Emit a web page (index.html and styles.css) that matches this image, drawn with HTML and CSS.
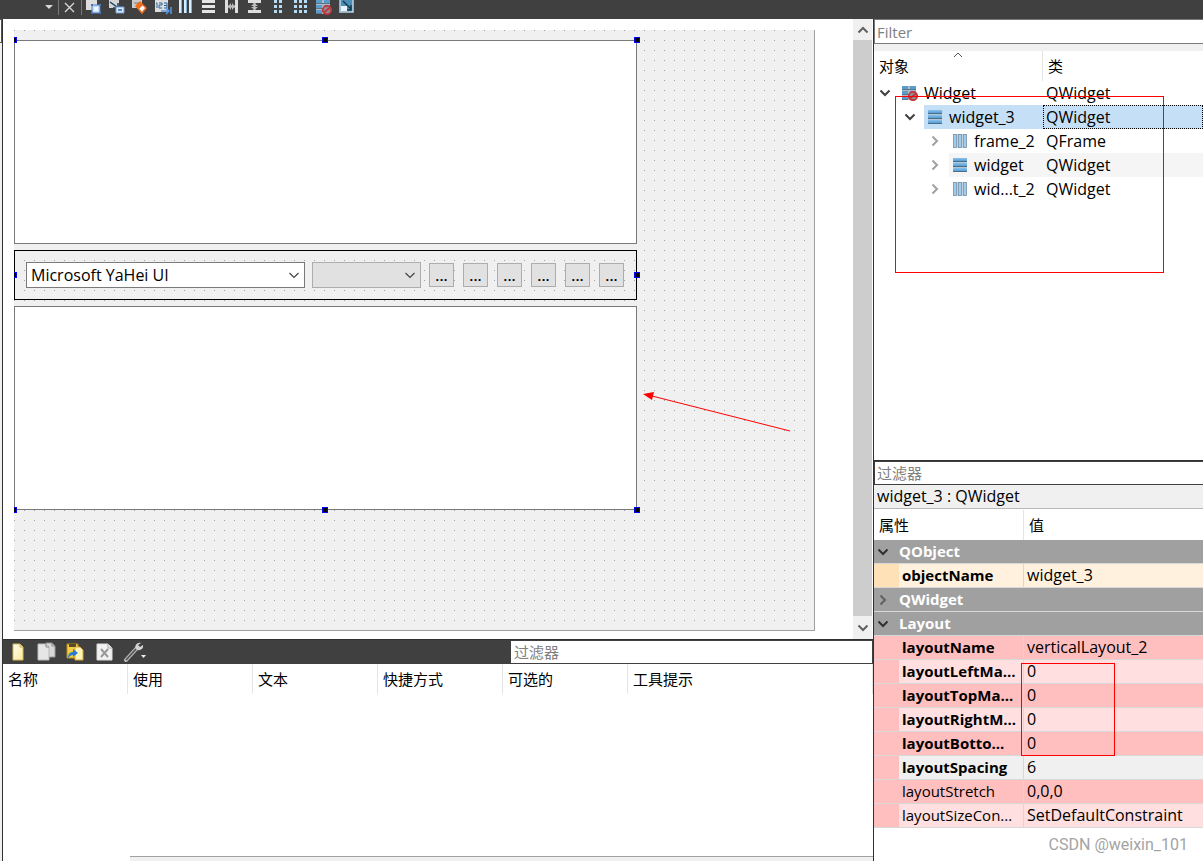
FILE: index.html
```
<!DOCTYPE html>
<html lang="zh-CN">
<head>
<meta charset="utf-8">
<title>Qt Designer</title>
<link rel="stylesheet" href="styles.css">
</head>
<body>
<svg class="defs" aria-hidden="true">
  <defs>
    <linearGradient id="blue" x1="0" y1="0" x2="0" y2="1"><stop offset="0" stop-color="#86c2ee"/><stop offset="1" stop-color="#4a90c6"/></linearGradient>
    <linearGradient id="cream" x1="0" y1="0" x2="1" y2="1"><stop offset="0" stop-color="#fffef0"/><stop offset="1" stop-color="#fbe9a0"/></linearGradient>
    <symbol id="down" viewBox="0 0 12 12"><path d="M1.500 3.500 6 8l4.500-4.500" fill="none" stroke="currentColor" stroke-width="2"/></symbol>
    <symbol id="right" viewBox="0 0 12 12"><path d="M3.500 1.500 8 6l-4.500 4.500" fill="none" stroke="currentColor" stroke-width="2"/></symbol>
    <symbol id="thin-down" viewBox="0 0 12 12"><path d="M1.500 4 6 8.500 10.500 4" fill="none" stroke="#444" stroke-width="1.200"/></symbol>
    <symbol id="vlay" viewBox="0 0 16 16"><path d="M1 1h14v14H1z" fill="#b4c4d2"/><g fill="url(#blue)"><rect x="1" y="1" width="14" height="4" rx="1"/><rect x="1" y="6" width="14" height="4" rx="1"/><rect x="1" y="11" width="14" height="4" rx="1"/></g><path d="M1 4.500h14M1 9.500h14M1 14.500h14" stroke="#47708f"/></symbol>
    <symbol id="hlay" viewBox="0 0 16 16"><path d="M1 1h14v14H1z" fill="#c9d0d6"/><g fill="#9fcdf0" stroke="#6f8ca4" stroke-width=".7"><rect x="1.500" y="1.500" width="3" height="13"/><rect x="6.500" y="1.500" width="3" height="13"/><rect x="11.500" y="1.500" width="3" height="13"/></g></symbol>
    <symbol id="broken" viewBox="0 0 16 16"><path d="M0 1h14v9H0zM0 10h8v5H0z" fill="#aeb9c4"/><path d="M0 1h6v3H0zM8 1h6v3H8zM0 6h6v3H0zM8 6h6v3H8zM0 11h6v3H0z" fill="#5a9ccb"/><path d="M0 4.500h14M0 9.500h8M0 14.500h6" stroke="#5c7488"/><circle cx="11" cy="11" r="4.200" fill="#8d8f96" stroke="#c4343a" stroke-width="1.800"/><path d="m8 13.500 6-5" stroke="#c4343a" stroke-width="1.800"/></symbol>
  </defs>
</svg>

<header class="toolbar">
  <button class="tool drop" aria-label="更多"><svg width="10" height="16" viewBox="0 0 10 16"><path d="M1 6h8l-4 4z" fill="#d8d8d8"/></svg></button>
  <span class="rule"></span>
  <button class="tool close" aria-label="关闭"><svg width="12" height="16" viewBox="0 0 12 16"><path d="m1 4 9 9M10 4l-9 9" stroke="#d8d8d8" stroke-width="1.300"/></svg></button>
  <span class="rule"></span>
  <div class="tools">
    <button class="tool" aria-label="编辑控件"><svg width="16" height="16" viewBox="0 0 16 16"><path d="M0 0h11v11H0z" fill="#ddd"/><path d="M6 6h8v8H6z" fill="#c5dcf8" stroke="#4f7fc0"/><path d="M8 8h4v4H8z" fill="#eef5ff"/><path d="M5 5h2v2H5zM13 5h2v2h-2zM5 13h2v2H5zM13 13h2v2h-2z" fill="#4878b8"/></svg></button>
    <button class="tool" aria-label="编辑信号/槽"><svg width="16" height="16" viewBox="0 0 16 16"><path d="M0 0h10v9H0z" fill="#d5d5d5"/><path d="m1 3 7 5M9 4v5H4" fill="none" stroke="#173f60" stroke-width="1.500"/><path d="M7 8h8v6H7z" fill="#d9e8fb" stroke="#799dcc"/><path d="M9 11h4" stroke="#5a86c0" stroke-width="2"/></svg></button>
    <button class="tool" aria-label="编辑伙伴"><svg width="16" height="16" viewBox="0 0 16 16"><path d="M0 0h10v9H0z" fill="#ccc"/><path d="M2 4h6" stroke="#777"/><path d="m4 7 4-4 6 6-4 5z" fill="#fff" stroke="#f06a20" stroke-width="1.500"/><path d="m4 7 4-4 3 3-4 4z" fill="#f26a1b"/></svg></button>
    <button class="tool" aria-label="编辑Tab顺序"><svg width="18" height="16" viewBox="0 0 18 16"><path d="M1 0h13v13H1z" fill="#ddd"/><path d="M2 4h1v5M5 4h3v2H5v3h3M10 4h3v5h-3M10 6.500h3" fill="none" stroke="#28669c"/><path d="M7 12h8m-3-3 3 3-3 3M17 8v7" fill="none" stroke="#5595dc" stroke-width="1.600"/></svg></button>
    <button class="tool" aria-label="水平布局"><svg width="16" height="16" viewBox="0 0 16 16"><path d="M1 1h3v13H1zM6 1h3v13H6zM11 1h3v13h-3z" fill="#d5edff"/><path d="M3.500 1v13M8.500 1v13M13.500 1v13" stroke="#7fb0d4"/></svg></button>
    <button class="tool" aria-label="垂直布局"><svg width="16" height="16" viewBox="0 0 16 16"><path d="M1 1h13v3H1zM1 6h13v3H1zM1 11h13v3H1z" fill="#e4e4e4"/></svg></button>
    <button class="tool" aria-label="水平分裂器"><svg width="16" height="16" viewBox="0 0 16 16"><path d="M1 1h3v13H1zM11 1h3v13h-3z" fill="#dedede"/><path d="M4 7.500h7" stroke="#ccc" stroke-width="2"/><path d="M7 4v7L4 7.500zM8 4v7l3-3.500z" fill="#bbb"/></svg></button>
    <button class="tool" aria-label="垂直分裂器"><svg width="16" height="16" viewBox="0 0 16 16"><path d="M1 1h13v3H1zM1 11h13v3H1z" fill="#dedede"/><path d="M7.500 4v7" stroke="#ccc" stroke-width="2"/><path d="M4 7h7L7.500 4zM4 8h7l-3.500 3z" fill="#bbb"/></svg></button>
    <button class="tool" aria-label="表单布局"><svg width="16" height="16" viewBox="0 0 16 16"><path d="M4 1h3v3H4zM9 1h3v3H9zM4 6h3v3H4zM9 6h3v3H9zM4 11h3v3H4zM9 11h3v3H9z" fill="#b4dcf6"/></svg></button>
    <button class="tool" aria-label="栅格布局"><svg width="16" height="16" viewBox="0 0 16 16"><path d="M1 1h3v3H1zM6 1h3v3H6zM11 1h3v3h-3zM1 6h3v3H1zM6 6h3v3H6zM11 6h3v3h-3zM1 11h3v3H1zM6 11h3v3H6zM11 11h3v3h-3z" fill="#b4dcf6"/></svg></button>
    <button class="tool" aria-label="打破布局"><svg width="16" height="16"><use href="#broken"/></svg></button>
    <button class="tool" aria-label="调整大小"><svg width="16" height="16" viewBox="0 0 16 16"><path d="M1 0h13v13H1z" fill="#4d8fb4" stroke="#bcd4e5" stroke-width="1.500"/><path d="M2 7h6v5H2z" fill="#e8f3fb"/><path d="m4 2 8 8m0-4v5H8" fill="none" stroke="#153954" stroke-width="1.500"/></svg></button>
  </div>
</header>

<div class="workspace">
  <div class="left-edge"><span></span></div>
  <main class="editor">
    <section class="canvas" aria-label="窗体">
      <div class="form">
        <div class="group">
          <div class="pane"></div>
          <div class="frame">
            <div class="combo font-combo"><select aria-label="字体"><option>Microsoft YaHei UI</option></select><svg width="12" height="12"><use href="#thin-down"/></svg></div>
            <div class="combo size-combo"><select aria-label="大小"><option></option></select><svg width="12" height="12"><use href="#thin-down"/></svg></div>
            <div class="tool-buttons"><button>...</button><button>...</button><button>...</button><button>...</button><button>...</button><button>...</button></div>
          </div>
          <div class="pane"></div>
          <i class="handle top left"></i><i class="handle top center"></i><i class="handle top right"></i>
          <i class="handle middle left"></i><i class="handle middle right"></i>
          <i class="handle bottom left"></i><i class="handle bottom center"></i><i class="handle bottom right"></i>
        </div>
        <svg class="arrow" width="150" height="42" viewBox="0 0 150 42"><path d="m9 5 138 35" stroke="red"/><path d="m0 3 11-2-2 8z" fill="red"/></svg>
      </div>
      <div class="scrollbar">
        <button aria-label="向上"><svg class="flip" width="12" height="12"><use href="#down"/></svg></button>
        <span class="thumb"></span>
        <button aria-label="向下"><svg width="12" height="12"><use href="#down"/></svg></button>
      </div>
    </section>

    <section class="actions" aria-label="动作编辑器">
      <div class="action-bar">
        <div class="action-tools">
          <button class="tool" aria-label="新建"><svg width="20" height="20" viewBox="0 0 20 20"><path d="M6 2h7l3 3v13H6z" fill="url(#cream)" stroke="#d9bd55"/><path d="M13 2v3h3" fill="none" stroke="#c3a94c"/></svg></button>
          <button class="tool" aria-label="复制"><svg width="20" height="20" viewBox="0 0 20 20"><path d="M10 1h6l3 3v11h-9z" fill="#d7d7d7" stroke="#999"/><path d="M2 2h8l3 3v13H2z" fill="#e6e6e6" stroke="#bbb"/><path d="M10 2v3h3M16 1v3h3" fill="none" stroke="#888"/></svg></button>
          <button class="tool" aria-label="粘贴"><svg width="20" height="20" viewBox="0 0 20 20"><path d="M2 2h11v14H2z" fill="#f4cf45" stroke="#b88d1a"/><path d="M4 2h7v3H4z" fill="#55482a"/><path d="M10 5h5l3 3v10h-8z" fill="#fff4b8" stroke="#d3a83b"/><path d="M3 16c0-4 2-6 5-6V7l5 4-5 4v-2c-2 0-3 1-5 3z" fill="#287dd0"/></svg></button>
          <button class="tool" aria-label="删除"><svg width="20" height="20" viewBox="0 0 20 20"><path d="M3 2h11l4 4v12H3z" fill="#f1f1f1" stroke="#ddd"/><path d="M14 2v4h4" fill="none" stroke="#aaa"/><path d="m7 7 7 8M14 7l-7 8" stroke="#999" stroke-width="2"/></svg></button>
          <button class="tool" aria-label="配置"><svg width="24" height="20" viewBox="0 0 24 20"><path d="M3 18 14 6" stroke="#bbb" stroke-width="4" stroke-linecap="round"/><path d="M3 18 14 6" stroke="#555" stroke-width="1.800"/><path d="M18 1c-4-1-7 3-5 6 3 3 8 0 7-4l-3 2-2-2z" fill="#d4d4d4"/><path d="M18 13h5l-2.500 3z" fill="#eee"/></svg></button>
        </div>
        <input class="action-filter" aria-label="过滤器" placeholder="过滤器">
      </div>
      <table class="action-table">
        <thead><tr><th>名称</th><th>使用</th><th>文本</th><th>快捷方式</th><th>可选的</th><th>工具提示</th></tr></thead>
      </table>
      <div class="bottom-tab"></div>
    </section>
  </main>

  <aside class="side">
    <section class="objects" aria-label="对象查看器">
      <input class="filter" aria-label="Filter" placeholder="Filter">
      <table class="tree">
        <thead><tr><th>对象<svg class="sort" width="10" height="6" viewBox="0 0 10 6"><path d="m1 5 4-4 4 4" fill="none" stroke="#555"/></svg></th><th>类</th></tr></thead>
        <tbody>
          <tr><td><div class="node"><button aria-label="折叠"><svg width="12" height="12"><use href="#down"/></svg></button><span><svg width="16" height="16"><use href="#broken"/></svg>Widget</span></div></td><td>QWidget</td></tr>
          <tr class="selected"><td><div class="node level-1"><button aria-label="折叠"><svg width="12" height="12"><use href="#down"/></svg></button><span><svg width="16" height="16"><use href="#vlay"/></svg>widget_3</span></div></td><td>QWidget</td></tr>
          <tr><td><div class="node level-2"><button aria-label="展开"><svg width="12" height="12"><use href="#right"/></svg></button><span><svg width="16" height="16"><use href="#hlay"/></svg>frame_2</span></div></td><td>QFrame</td></tr>
          <tr class="alternate"><td><div class="node level-2"><button aria-label="展开"><svg width="12" height="12"><use href="#right"/></svg></button><span><svg width="16" height="16"><use href="#vlay"/></svg>widget</span></div></td><td>QWidget</td></tr>
          <tr><td><div class="node level-2"><button aria-label="展开"><svg width="12" height="12"><use href="#right"/></svg></button><span><svg width="16" height="16"><use href="#hlay"/></svg>wid...t_2</span></div></td><td>QWidget</td></tr>
        </tbody>
      </table>
      <div class="mark tree-mark"></div>
    </section>

    <section class="properties" aria-label="属性编辑器">
      <input class="filter" aria-label="过滤器" placeholder="过滤器">
      <div class="object-label">widget_3 : QWidget</div>
      <table class="props">
        <colgroup><col class="branch"><col class="name"><col></colgroup>
        <thead><tr><th colspan="2">属性</th><th>值</th></tr></thead>
        <tbody>
          <tr class="section"><td><button aria-label="折叠"><svg width="12" height="12"><use href="#down"/></svg></button></td><td colspan="2">QObject</td></tr>
          <tr class="cream"><td></td><td class="changed">objectName</td><td>widget_3</td></tr>
          <tr class="section closed"><td><button aria-label="展开"><svg width="12" height="12"><use href="#right"/></svg></button></td><td colspan="2">QWidget</td></tr>
          <tr class="section"><td><button aria-label="折叠"><svg width="12" height="12"><use href="#down"/></svg></button></td><td colspan="2">Layout</td></tr>
          <tr class="pink"><td></td><td class="changed">layoutName</td><td>verticalLayout_2</td></tr>
          <tr class="pale"><td></td><td class="changed">layoutLeftMa...</td><td>0</td></tr>
          <tr class="pink"><td></td><td class="changed">layoutTopMa...</td><td>0</td></tr>
          <tr class="pale"><td></td><td class="changed">layoutRightM...</td><td>0</td></tr>
          <tr class="pink"><td></td><td class="changed">layoutBotto...</td><td>0</td></tr>
          <tr class="current"><td></td><td class="changed">layoutSpacing</td><td>6</td></tr>
          <tr class="pink"><td></td><td>layoutStretch</td><td>0,0,0</td></tr>
          <tr class="pale"><td></td><td>layoutSizeCon...</td><td>SetDefaultConstraint</td></tr>
        </tbody>
      </table>
      <div class="credit">CSDN @weixin_101</div>
      <div class="mark value-mark"></div>
    </section>
  </aside>
</div>
</body>
</html>
```
FILE: styles.css
```
* { box-sizing: border-box; }
html, body { height: 100%; }
body {
  margin: 0;
  display: flex;
  flex-direction: column;
  overflow: hidden;
  background: #fff;
  color: #000;
  font: 15px/24px "Open Sans", "Noto Sans CJK SC", sans-serif;
}
button, input, select { font: inherit; color: inherit; border-radius: 0; }
button { padding: 0; border: 0; background: none; }
svg { display: block; flex: none; }
table { border-collapse: separate; border-spacing: 0; table-layout: fixed; width: 100%; }
th, td { padding: 0; text-align: left; font-weight: normal; white-space: nowrap; overflow: hidden; }
input::placeholder { color: #808080; opacity: 1; }
.defs { position: absolute; width: 0; height: 0; }

.toolbar {
  flex: none;
  display: flex;
  align-items: flex-end;
  height: 19px;
  padding: 0 0 4px 44px;
  overflow: hidden;
  background: #404040;
}
.tool { flex: none; display: flex; justify-content: center; }
.drop { width: 10px; margin-right: 4px; }
.close { width: 22px; }
.rule { width: 1px; height: 20px; background: #777; }
.tools { display: flex; gap: 7px; padding-left: 4px; }
.tools .tool { width: 16px; }

.workspace { flex: 1; min-height: 0; display: grid; grid-template-columns: 3px minmax(0, 1fr) 330px; }
.left-edge { background: #f0f0f0; border-right: 1px solid #303030; }
.left-edge span { display: block; height: 24px; background: #fff; border: 1px solid #555; border-left: 0; }
.editor { display: flex; flex-direction: column; min-height: 0; }

.canvas { flex: 1; min-height: 0; display: flex; justify-content: space-between; }
.form {
  position: relative;
  flex: none;
  width: 801px;
  height: 601px;
  margin: 11px 0 0 11px;
  padding: 10px 177px 0 0;
  border: solid #a0a0a0;
  border-width: 0 1px 1px 0;
  background: conic-gradient(from 0deg at 1px 1px, transparent 270deg, #a0a0a0 270deg) 0 0 / 10px 10px #f0f0f0;
}
.group { position: relative; display: flex; flex-direction: column; gap: 6px; }
.pane { height: 204px; background: #fff; border: 1px solid #7a7a7a; }
.frame { display: flex; align-items: center; height: 50px; padding: 0 12px 0 11px; border: 1px solid #000; }
.combo { position: relative; height: 26px; }
.combo select {
  appearance: none;
  display: block;
  width: 100%;
  height: 100%;
  padding: 0 24px 2px 4px;
  border: 1px solid #7a7a7a;
  background: #fff;
}
.combo svg { position: absolute; right: 5px; top: 7px; pointer-events: none; }
.font-combo { flex: 1; margin-right: 7px; font-size: 16px; }
.size-combo { width: 109px; margin-right: 8px; }
.size-combo select { background: #e1e1e1; border-color: #adadad; }
.tool-buttons { display: flex; gap: 9px; }
.tool-buttons button { width: 25px; height: 24px; line-height: 22px; font-weight: 600; border: 1px solid #adadad; background: #e1e1e1; }

.handle { position: absolute; width: 6px; height: 6px; background: #000; border: 1px solid #00f; }
.handle.top { top: -3px; }
.handle.middle { top: 232px; }
.handle.bottom { bottom: -3px; }
.handle.left { left: 0; width: 3px; border-left: 0; }
.handle.center { left: 308px; }
.handle.right { right: -3px; }
.arrow { position: absolute; left: 629px; top: 361px; fill: none; }

.scrollbar { display: flex; flex-direction: column; width: 20px; background: #f0f0f0; border-right: 1px solid #fff; }
.scrollbar button { display: flex; justify-content: center; align-items: center; height: 21px; color: #606060; }
.scrollbar .thumb { flex: 1; background: #cdcdcd; }
.scrollbar button:last-child { height: 23px; }
.flip { transform: rotate(180deg); }

.actions { flex: none; display: flex; flex-direction: column; height: 222px; border-top: 1px solid #303030; }
.action-bar { display: flex; justify-content: space-between; height: 24px; background: #404040; }
.action-tools { display: flex; align-items: center; gap: 9px; padding-left: 4px; }
.action-filter {
  width: 362px;
  min-width: 0;
  margin-top: 1px;
  padding: 0 3px;
  border: solid #404040;
  border-width: 0 1px 1px 0;
  background: #fff;
}
.action-table th { width: 125px; height: 30px; padding-left: 5px; border-right: 1px solid #e5e5e5; }
.action-table th:last-child { width: auto; }
.bottom-tab { height: 5px; margin: auto 0 0 127px; background: #f0f0f0; border: solid #a0a0a0; border-width: 1px 0 0; }

.side { display: flex; flex-direction: column; min-height: 0; border-left: 1px solid #303030; }
.objects { position: relative; flex: 1; min-height: 0; background: #fff; }
.filter { display: block; width: 100%; height: 25px; padding: 0 2px; border: 1px solid #7a7a7a; border-right: 0; background: #fff; }
.tree { border-top: 7px solid #f0f0f0; }
.tree th { position: relative; height: 30px; padding-left: 5px; }
.tree th:first-child { width: 169px; border-right: 1px solid #e5e5e5; }
.tree .sort { position: absolute; left: 79px; top: 1px; }
.tree td { height: 24px; font-size: 16px; line-height: 24px; }
.tree td + td { padding-left: 3px; }
.node { display: flex; height: 24px; }
.node button { flex: none; display: flex; align-items: center; width: 25px; padding-left: 5px; color: #404040; }
.node > span { flex: 1; display: flex; align-items: center; gap: 6px; padding-left: 3px; }
.level-1 { padding-left: 25px; }
.level-2 { padding-left: 50px; }
.level-2 button { color: #a0a0a0; }
.selected .node > span, .selected td + td { background: #c5dff7; }
.selected td + td { outline: 1px dotted #000; outline-offset: -1px; }
.alternate .node > span, .alternate td + td { background: #f5f5f5; }
.mark { position: absolute; border: 1px solid #f00; pointer-events: none; }
.tree-mark { left: 21px; top: 77px; width: 269px; height: 177px; }

.properties { position: relative; flex: none; height: 401px; border-top: 1px solid #303030; }
.properties .filter { height: 24px; border-color: #404040; }
.object-label { height: 24px; padding-left: 3px; font-size: 16px; line-height: 23px; background: #f0f0f0; border-bottom: 1px solid #b8b8b8; }
.props { border-top: 1px solid #fff; }
.props .branch { width: 25px; }
.props .name { width: 125px; }
.props th { height: 30px; padding-left: 5px; }
.props th:first-child { border-right: 1px solid #e5e5e5; }
.props td { height: 24px; line-height: 23px; border-bottom: 1px solid #d8d8d8; }
.props td:nth-child(2) { padding-left: 3px; border-right: 1px solid #d8d8d8; }
.props td:nth-child(3) { padding-left: 3px; font-size: 16px; }
.props .changed { font-weight: bold; }
.props .section td { padding-left: 0; border-right: 0; background: #a0a0a0; color: #fff; font-weight: bold; }
.section button { display: block; padding-left: 3px; color: #303030; }
.section.closed button { color: #606060; }
.cream td { background: #fff1de; }
.pale td { background: #ffdfdf; }
.current td { background: #f0f0f0; }
.cream td:first-child { background: #ffe1b7; }
.pink td, .pale td:first-child, .current td:first-child { background: #ffbfbf; }
.credit { padding: 5px 15px 0 0; text-align: right; color: #a4a4a4; font-family: Roboto, sans-serif; font-size: 16px; }
.value-mark { left: 147px; top: 202px; width: 94px; height: 93px; }
```
